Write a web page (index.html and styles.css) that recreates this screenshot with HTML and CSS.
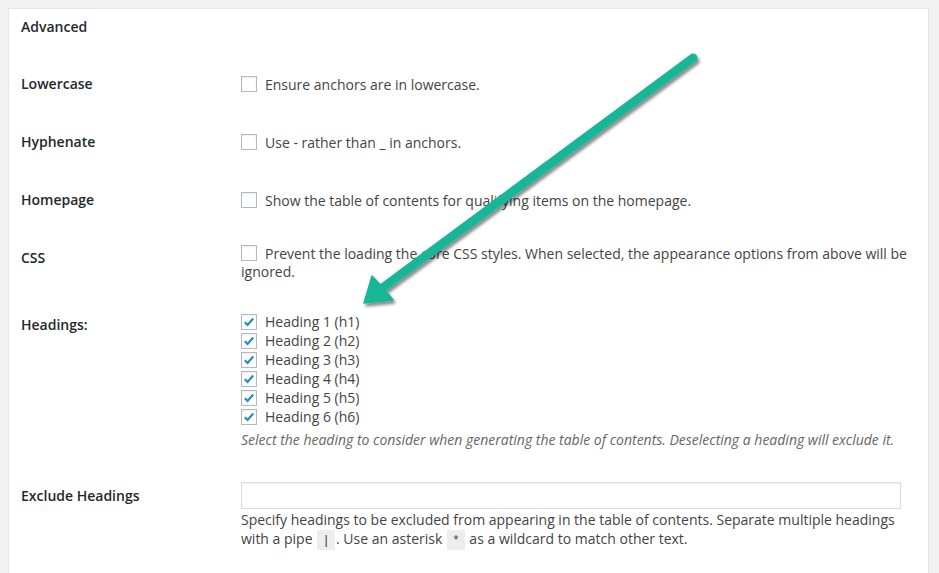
FILE: index.html
```
<!DOCTYPE html>
<html>
<head>
<meta charset="utf-8">
<link rel="stylesheet" href="styles.css">
</head>
<body>
<div class="panel">
  <div class="section-title">Advanced</div>
  <table class="form-table">
    <tr>
      <th>Lowercase</th>
      <td><label class="cb-line"><span class="cb"></span>Ensure anchors are in lowercase.</label></td>
    </tr>
    <tr>
      <th>Hyphenate</th>
      <td><label class="cb-line"><span class="cb"></span>Use - rather than _ in anchors.</label></td>
    </tr>
    <tr>
      <th>Homepage</th>
      <td><label class="cb-line"><span class="cb"></span>Show the table of contents for qualifying items on the homepage.</label></td>
    </tr>
    <tr>
      <th>CSS</th>
      <td class="wrap-td"><span class="cb cb-inline"></span>Prevent the loading the core CSS styles. When selected, the appearance options from above will be ignored.</td>
    </tr>
    <tr>
      <th>Headings:</th>
      <td class="list-td">
        <label class="cb-line"><span class="cb on"><svg viewBox="0 0 16 16"><path d="M3.2 8.2 L6.4 11.4 L12.8 4" /></svg></span>Heading 1 (h1)</label>
        <label class="cb-line"><span class="cb on"><svg viewBox="0 0 16 16"><path d="M3.2 8.2 L6.4 11.4 L12.8 4" /></svg></span>Heading 2 (h2)</label>
        <label class="cb-line"><span class="cb on"><svg viewBox="0 0 16 16"><path d="M3.2 8.2 L6.4 11.4 L12.8 4" /></svg></span>Heading 3 (h3)</label>
        <label class="cb-line"><span class="cb on"><svg viewBox="0 0 16 16"><path d="M3.2 8.2 L6.4 11.4 L12.8 4" /></svg></span>Heading 4 (h4)</label>
        <label class="cb-line"><span class="cb on"><svg viewBox="0 0 16 16"><path d="M3.2 8.2 L6.4 11.4 L12.8 4" /></svg></span>Heading 5 (h5)</label>
        <label class="cb-line"><span class="cb on"><svg viewBox="0 0 16 16"><path d="M3.2 8.2 L6.4 11.4 L12.8 4" /></svg></span>Heading 6 (h6)</label>
        <p class="description">Select the heading to consider when generating the table of contents. Deselecting a heading will exclude it.</p>
      </td>
    </tr>
    <tr>
      <th>Exclude Headings</th>
      <td class="input-td">
        <div class="text-input"></div>
        <p class="help">Specify headings to be excluded from appearing in the table of contents. Separate multiple headings with a pipe <code>|</code>. Use an asterisk <code>*</code> as a wildcard to match other text.</p>
      </td>
    </tr>
  </table>
</div>
<svg class="arrow" width="939" height="573" viewBox="0 0 939 573">
  <defs>
    <filter id="sh" x="-10%" y="-10%" width="130%" height="130%">
      <feDropShadow dx="2" dy="3" stdDeviation="1.8" flood-color="#000" flood-opacity="0.45"/>
    </filter>
  </defs>
  <g filter="url(#sh)" fill="#19b697" stroke="#19b697">
    <line x1="693" y1="58" x2="381" y2="289" stroke-width="9" stroke-linecap="round"/>
    <polygon points="364,303 372,276 385,290 393,300" stroke-width="1.5" stroke-linejoin="round"/>
  </g>
</svg>
</body>
</html>
```
FILE: styles.css
```
html, body {
  margin: 0;
  padding: 0;
}
body {
  background: #f1f1f1;
  font-family: "Open Sans", "Liberation Sans", sans-serif;
  color: #444;
  font-size: 14px;
  height: 573px;
  overflow: hidden;
  position: relative;
}
.panel {
  margin: 8px 0 0 8px;
  background: #fff;
  border: 1px solid #e5e5e5;
  padding: 0 12px;
  box-sizing: border-box;
  width: 921px;
  height: 600px;
}
.section-title {
  color: #23282d;
  font-weight: 600;
  font-size: 14px;
  line-height: 18px;
  padding-top: 9px;
  height: 37px;
}
.form-table {
  border-collapse: collapse;
  width: 100%;
}
.form-table th {
  width: 200px;
  padding: 20px 10px 20px 0;
  text-align: left;
  vertical-align: top;
  font-weight: 600;
  color: #23282d;
  line-height: 18px;
  font-size: 14px;
}
.form-table td {
  padding: 15px 10px;
  vertical-align: middle;
  line-height: 19px;
  font-size: 14px;
}
.cb-line {
  display: flex;
  align-items: center;
  height: 19px;
}
.cb {
  display: inline-block;
  width: 16px;
  height: 16px;
  border: 1px solid #b4b9be;
  box-sizing: border-box;
  background: #fff;
  margin-right: 8px;
  flex: none;
  box-shadow: inset 0 1px 2px rgba(0,0,0,0.07);
}
.cb svg {
  display: block;
  width: 14px;
  height: 14px;
}
.cb svg path {
  fill: none;
  stroke: #1e8cbe;
  stroke-width: 2.4;
}
.cb-inline {
  vertical-align: -2px;
}
.form-table .wrap-td {
  line-height: 18px;
  padding-top: 16px;
  padding-bottom: 15px;
  padding-right: 0;
}
.form-table .list-td {
  padding-top: 16px;
  padding-bottom: 18px;
}
.description {
  margin: 4px 0 0;
  font-style: italic;
  color: #666;
  line-height: 19px;
}
.form-table .input-td {
  padding-top: 15px;
}
.text-input {
  width: 660px;
  height: 27px;
  box-sizing: border-box;
  border: 1px solid #ddd;
  box-shadow: inset 0 1px 2px rgba(0,0,0,0.07);
  background: #fff;
}
.help {
  margin: 1px 0 0;
  line-height: 19px;
}
code {
  font-family: "Liberation Mono", monospace;
  font-size: 13px;
  line-height: 0;
  background: rgba(0,0,0,0.07);
  padding: 3px 5px 2px;
  margin: 0 1px;
}
.arrow {
  position: absolute;
  left: 0;
  top: 0;
  pointer-events: none;
}
```
